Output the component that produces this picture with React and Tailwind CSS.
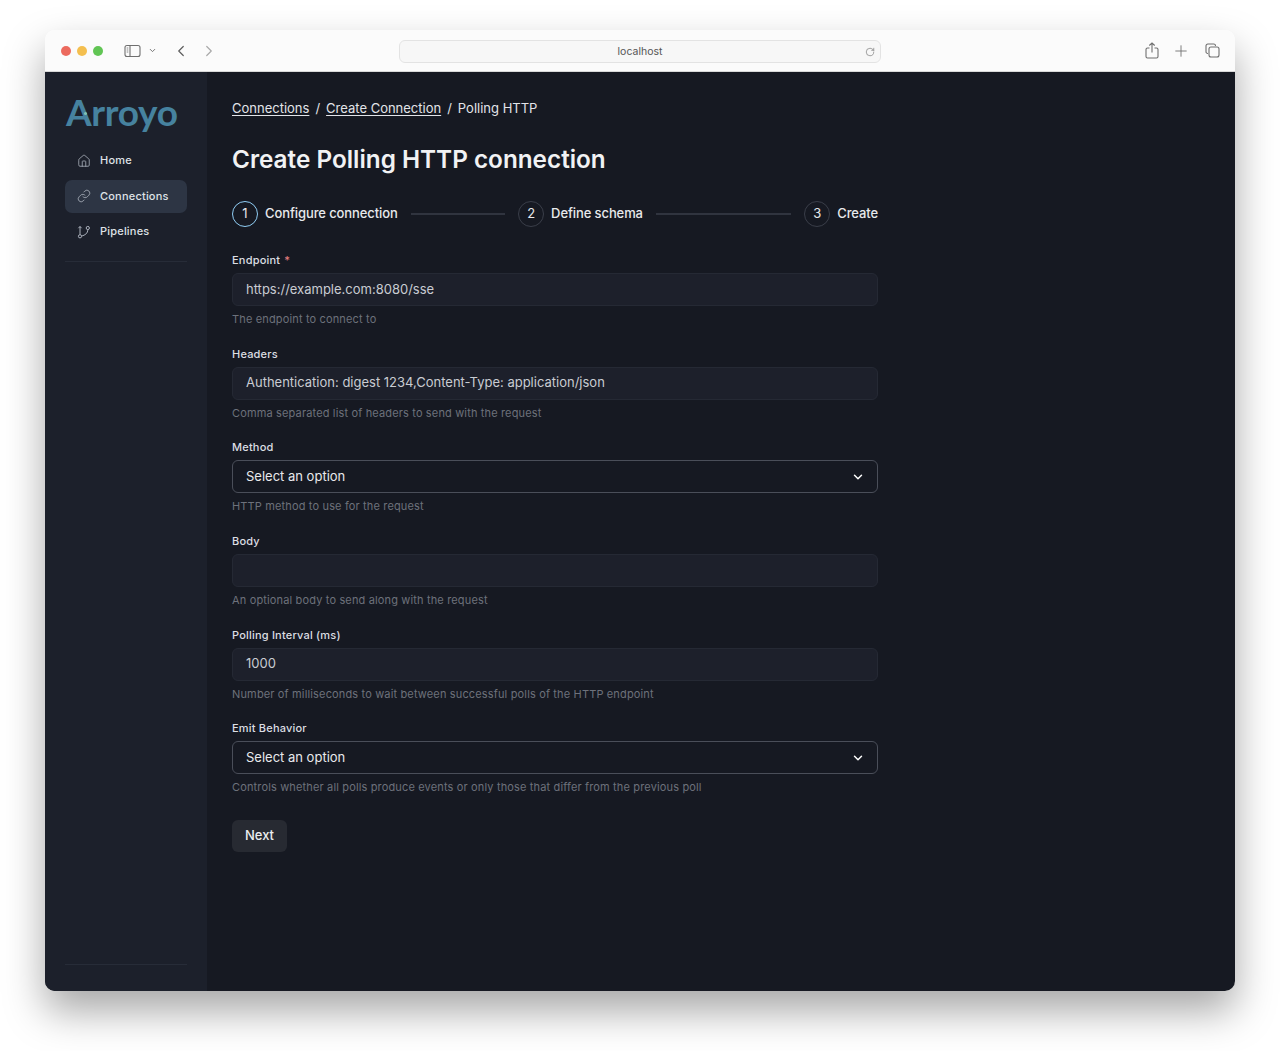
import React from "react";
import { ChevronDown, ChevronLeft, ChevronRight, Home, Link, Plus, RotateCw } from "lucide-react";

const fields = [
  { label: "Endpoint", required: true, value: "https://example.com:8080/sse", help: "The endpoint to connect to" },
  { label: "Headers", value: "Authentication: digest 1234,Content-Type: application/json", help: "Comma separated list of headers to send with the request" },
  { label: "Method", select: true, value: "Select an option", help: "HTTP method to use for the request" },
  { label: "Body", value: "", help: "An optional body to send along with the request" },
  { label: "Polling Interval (ms)", value: "1000", help: "Number of milliseconds to wait between successful polls of the HTTP endpoint" },
  { label: "Emit Behavior", select: true, value: "Select an option", help: "Controls whether all polls produce events or only those that differ from the previous poll" },
];

const Field = ({ field }) => (
  <div className="mb-[18.67px]">
    <div className="mb-[5px] h-4 text-[11px] leading-4 font-medium tracking-[0.2px] text-[#dcdee3]">
      {field.label}
      {field.required && <span className="ml-1 text-[#e57f7f]">*</span>}
    </div>
    {field.select ? (
      <div className="flex h-[33px] items-center justify-between rounded-[6px] border border-[#4a4e59] px-[13px] text-[13px] text-[#e8e9ec]">
        <span>{field.value}</span>
        <ChevronDown className="-mr-[1px] h-[14px] w-[14px] text-white" strokeWidth={2.5} />
      </div>
    ) : (
      <div className="flex h-[33px] items-center rounded-[6px] border border-[#252934] bg-[#1d202b] px-[13px] text-[13px] text-[#c9ccd2]">
        {field.value}
      </div>
    )}
    <div className="mt-[5px] h-4 text-[11px] leading-4 tracking-[0.15px] text-[#6d717b]">{field.help}</div>
  </div>
);

const Step = ({ n, label, active, last }) => (
  <div className={`flex items-center ${last ? "" : "flex-1"}`}>
    <div className={`flex h-[26px] w-[26px] shrink-0 items-center justify-center rounded-full border-[1.5px] text-[13px] text-[#e8e9ec] ${active ? "border-[#90cdf4]" : "border-[#3a3e49]"}`}>
      {n}
    </div>
    <span className="ml-[7px] text-[13px] font-medium tracking-[-0.1px] text-[#e8e9ec]">{label}</span>
    {!last && <div className="ml-[13px] h-[2px] flex-1 bg-[#30343f]" />}
  </div>
);

const BranchIcon = () => (
  <svg className="h-[14px] w-[14px] text-[#aab0bb]" viewBox="0 0 14 14" fill="none" stroke="currentColor" strokeWidth="1">
    <circle cx="3" cy="11.3" r="1.6" />
    <circle cx="10.8" cy="3" r="1.6" />
    <path d="M3 9.7V1.5M1.4 3.2 3 1.5l1.6 1.7" />
    <path d="M10.8 4.6c0 3.6-2.6 5.6-6.2 6.4" />
  </svg>
);

const NavItem = ({ icon, label, active }) => (
  <div className={`flex h-[33px] items-center rounded-[7px] pl-[12px] ${active ? "bg-[#2d3544]" : ""}`}>
    {icon}
    <span className="ml-[9px] text-[11px] font-medium tracking-[0.2px] text-[#dfe2e7]">{label}</span>
  </div>
);

export default function App() {
  return (
    <div className="h-[1051px] bg-white pt-[30px] pl-[45px] font-['Inter',sans-serif]">
      <div className="flex h-[961px] w-[1190px] flex-col overflow-hidden rounded-[10px] shadow-[0_20px_40px_rgba(0,0,0,0.35)]">
        <div className="flex h-[42px] shrink-0 items-center border-b border-[#d8d8d8] bg-[#fbfbfb] pr-[15px] pl-[16px] text-[#6f6f6f]">
          <div className="flex gap-[6px]">
            <div className="h-[10px] w-[10px] rounded-full bg-[#ec6a5e]" />
            <div className="h-[10px] w-[10px] rounded-full bg-[#f4bf4f]" />
            <div className="h-[10px] w-[10px] rounded-full bg-[#61c554]" />
          </div>
          <svg className="ml-[21px]" width="17" height="14" viewBox="0 0 17 14" fill="none" stroke="#6f6f6f" strokeWidth="1.1">
            <rect x="1" y="1.5" width="15" height="11" rx="2" />
            <path d="M6 1.5v11" />
            <path d="M2.7 4h1.6M2.7 6h1.6M2.7 8h1.6" strokeWidth="0.8" />
          </svg>
          <ChevronDown className="ml-[7px] h-[9px] w-[9px]" strokeWidth={2.5} />
          <ChevronLeft className="ml-[15px] h-[18px] w-[18px] text-[#5d5d5d]" strokeWidth={1.6} />
          <ChevronRight className="ml-[10px] h-[18px] w-[18px] text-[#a9a9a9]" strokeWidth={1.6} />
          <div className="relative mt-[2px] ml-[181px] flex h-[23px] w-[482px] items-center justify-center rounded-[6px] border border-[#e3e3e3] bg-[#f7f7f7] text-[10.5px] text-[#555555]">
            localhost
            <RotateCw className="absolute right-[5px] h-[10px] w-[10px] text-[#6f6f6f]" strokeWidth={1.5} />
          </div>
          <div className="ml-auto flex items-center">
            <svg width="14" height="17" viewBox="0 0 14 17" fill="none" stroke="#6f6f6f" strokeWidth="1.1">
              <path d="M4.5 6H2.5a1.5 1.5 0 0 0-1.5 1.5v7A1.5 1.5 0 0 0 2.5 16h9a1.5 1.5 0 0 0 1.5-1.5v-7A1.5 1.5 0 0 0 11.5 6H9.5" />
              <path d="M7 10.5V1M4.3 3.5 7 1l2.7 2.5" />
            </svg>
            <Plus className="ml-[13px] h-[18px] w-[18px]" strokeWidth={1.2} />
            <svg width="15" height="15" viewBox="0 0 15 15" fill="none" stroke="#6f6f6f" strokeWidth="1.1" className="ml-[15px]">
              <path d="M3 10.5h-.2A1.8 1.8 0 0 1 1 8.7V2.8A1.8 1.8 0 0 1 2.8 1h5.9a1.8 1.8 0 0 1 1.8 1.8V3" />
              <rect x="4" y="4" width="10" height="10" rx="2" />
            </svg>
          </div>
        </div>

        <div className="flex min-h-0 flex-1 bg-[#161922]">
          <div className="flex w-[162px] shrink-0 flex-col bg-[#1c202b] px-[20px]">
            <div className="relative mt-[19px] h-[44px] pl-[1px] font-['Lato',sans-serif] text-[37px] leading-[42px] font-bold tracking-[-0.3px] text-[#46829f]">
              Arroyo
              <div className="absolute top-[21px] left-[19px] h-[3px] w-[3px] rounded-full bg-[#7fc4b4]" />
            </div>
            <div className="mt-[9px] flex flex-col gap-[2.5px]">
              <NavItem icon={<Home className="h-[14px] w-[14px] text-[#aab0bb]" strokeWidth={1.4} />} label="Home" />
              <NavItem icon={<Link className="h-[14px] w-[14px] text-[#aab0bb]" strokeWidth={1.4} />} label="Connections" active />
              <NavItem icon={<BranchIcon />} label="Pipelines" />
            </div>
            <div className="mt-[13px] h-[1px] bg-[#272c38]" />
            <div className="mt-auto mb-[26px] h-[1px] bg-[#272c38]" />
          </div>

          <div className="w-[671px] pl-[25px]">
            <div className="mt-[27px] flex h-[18px] items-center text-[13px] leading-[18px] text-[#e2e4e9]">
              <span className="underline underline-offset-2">Connections</span>
              <span className="mx-[6px]">/</span>
              <span className="underline underline-offset-2">Create Connection</span>
              <span className="mx-[6px]">/</span>
              <span>Polling HTTP</span>
            </div>
            <div className="mt-[26px] h-[32px] text-[24.3px] leading-[32px] font-semibold text-[#f1f2f4]">Create Polling HTTP connection</div>
            <div className="mt-[26px] flex h-[26px] items-center gap-[13px]">
              <Step n="1" label="Configure connection" active />
              <Step n="2" label="Define schema" />
              <Step n="3" label="Create" last />
            </div>
            <div className="mt-[25px]">
              {fields.map((field) => (
                <Field key={field.label} field={field} />
              ))}
            </div>
            <button className="mt-[6px] h-[32px] w-[55px] rounded-[6px] bg-[#272a32] text-[13px] font-medium text-[#eceef0]">Next</button>
          </div>
        </div>
      </div>
    </div>
  );
}
